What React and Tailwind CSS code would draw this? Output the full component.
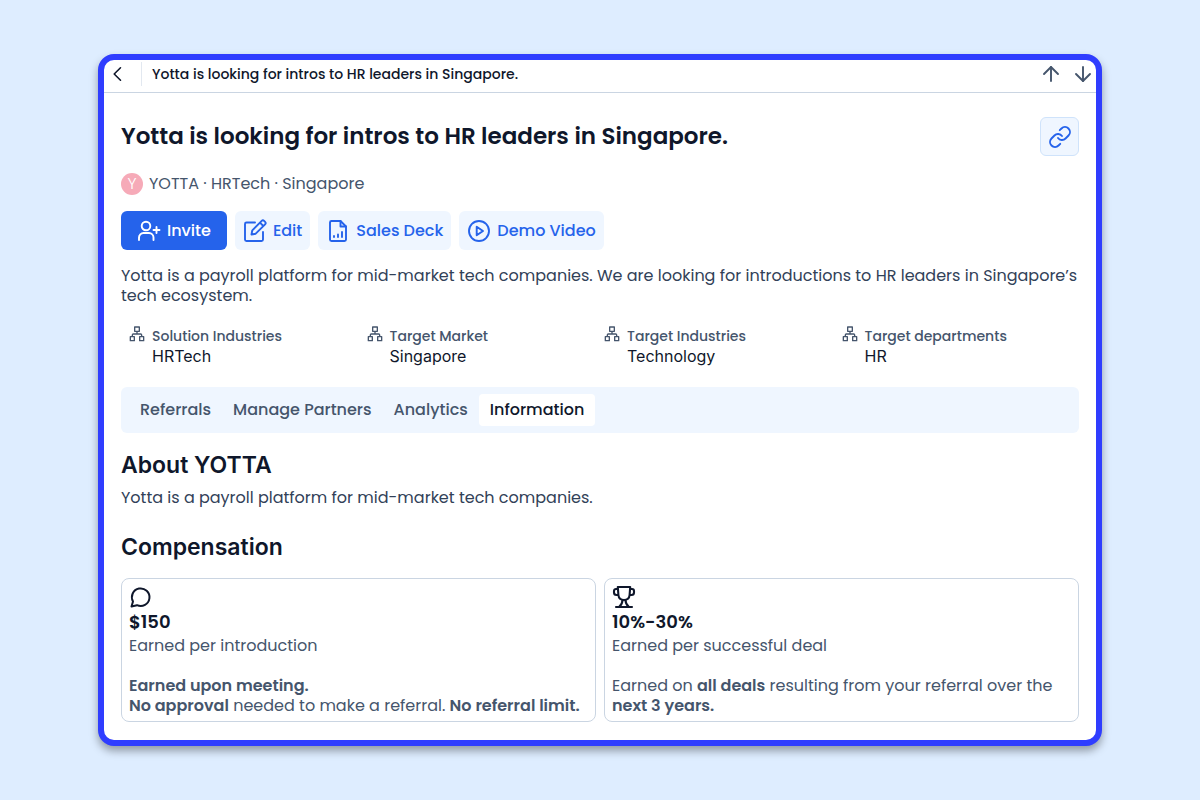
import React from 'react';
import { ArrowDown, ArrowUp, Link } from 'lucide-react';

const Icon = ({ className, width = 1.5, children }) => (
    <svg
        viewBox="0 0 24 24"
        fill="none"
        stroke="currentColor"
        strokeWidth={width}
        strokeLinecap="round"
        strokeLinejoin="round"
        className={className}
        aria-hidden="true"
    >
        {children}
    </svg>
);

const BackIcon = () => (
    <Icon className="size-6" width={1.6}>
        <path d="M15.5 5.8 9.2 12l6.3 6.2" />
    </Icon>
);

const InviteIcon = () => (
    <Icon className="size-6" width={1.9}>
        <circle cx="9" cy="7" r="4.3" />
        <path d="M2 21v-2.5a4.5 4.5 0 0 1 4.5-4.5h5.5a4.5 4.5 0 0 1 4.5 4.5V21M19.5 8v6M16.5 11h6" />
    </Icon>
);

const EditIcon = () => (
    <Icon className="size-6" width={1.9}>
        <path d="M12 3.5H3.500A1.5 1.5 0 0 0 2 5v15.500A1.5 1.5 0 0 0 3.5 22h15a1.5 1.500 0 0 0 1.5-1.500V13" />
        <path d="M8.500 15.500l.8-4.200L18.700 1.900a1.700 1.700 0 0 1 2.400 0l1 1a1.700 1.700 0 0 1 0 2.400l-9.400 9.400zM17 3.700l3.300 3.300" />
    </Icon>
);

const DeckIcon = () => (
    <Icon className="size-6" width={1.9}>
        <path d="M14.5 2H5.500A1.5 1.500 0 0 0 4 3.500v17A1.5 1.5 0 0 0 5.5 22h13a1.5 1.5 0 0 0 1.5-1.5V7.500z" />
        <path d="M14.5 2v5.500H20M8 17v1M12 15.500V18M16 13v5" />
    </Icon>
);

const PlayIcon = () => (
    <Icon className="size-6" width={1.9}>
        <circle cx="12" cy="12" r="10" />
        <path d="M9.700 7.800v8.400l6.300-4.200z" />
    </Icon>
);

const SitemapIcon = () => (
    <Icon className="size-4 shrink-0 text-slate-600" width={2}>
        <path d="M8.500 1.500h7v6.500h-7zM2 16h6v6H2zM16 16h6v6h-6zM12 8v4M5 16v-2.500A1.500 1.500 0 0 1 6.500 12h11a1.500 1.500 0 0 1 1.500 1.500V16" />
    </Icon>
);

const ChatIcon = () => (
    <Icon className="size-6" width={2}>
        <path d="M2.500 21.500l1.500-5A8.800 8.800 0 1 1 8 20.200z" />
    </Icon>
);

const TrophyIcon = () => (
    <Icon className="size-6" width={2.100}>
        <path d="M5.800 2h12.400l-.6 8c-.3 3.200-2.800 5-5.600 5s-5.300-1.800-5.600-5zM5.800 4H4a2 2 0 0 0-2 2v1.500a2.500 2.500 0 0 0 2.500 2.500h1.800M18.200 4H20a2 2 0 0 1 2 2v1.500a2.500 2.500 0 0 1-2.500 2.500h-1.800" />
        <path d="M10.500 15c0 3-1 5-3.500 7M13.500 15c0 3 1 5 3.500 7M4 22h16" />
    </Icon>
);

const actions = [
    { label: 'Edit', icon: EditIcon },
    { label: 'Sales Deck', icon: DeckIcon },
    { label: 'Demo Video', icon: PlayIcon },
];

const fields = [
    { label: 'Solution Industries', value: 'HRTech' },
    { label: 'Target Market', value: 'Singapore' },
    { label: 'Target Industries', value: 'Technology' },
    { label: 'Target departments', value: 'HR' },
];

const tabs = ['Referrals', 'Manage Partners', 'Analytics', 'Information'];

const TopBar = () => (
    <header className="flex h-[33px] items-center justify-between border-b border-slate-300 pb-1 pl-px">
        <div className="flex items-center">
            <button type="button" aria-label="Back" className="text-slate-900">
                <BackIcon />
            </button>
            <span className="ml-3 h-6 w-px bg-slate-200" />
            <span className="ml-[10px] text-sm leading-6 font-medium text-slate-900">
                Yotta is looking for intros to HR leaders in Singapore.
            </span>
        </div>
        <div className="flex gap-2 pr-px text-slate-600">
            <button type="button" aria-label="Previous">
                <ArrowUp className="size-6" strokeWidth={1.9} />
            </button>
            <button type="button" aria-label="Next">
                <ArrowDown className="size-6" strokeWidth={1.9} />
            </button>
        </div>
    </header>
);

const RewardCard = ({ icon: CardIcon, amount, caption, children }) => (
    <article className="rounded-lg border border-slate-300 px-[7px] pt-[6px] pb-[5px] text-slate-600">
        <div className="text-slate-900">
            <CardIcon />
            <p className="mt-[3px] text-lg leading-5 font-semibold">{amount}</p>
        </div>
        <p className="mt-1 leading-5">{caption}</p>
        <p className="mt-5 leading-5">{children}</p>
    </article>
);

const App = () => {
    return (
        <div className="min-h-screen bg-[#deedff] px-[98px] py-[54px] font-['Poppins','Inter',sans-serif] text-base">
            <main className="overflow-hidden rounded-2xl border-[6px] border-[#2f3dff] bg-white shadow-[0_5px_8px_rgba(0,0,0,0.35)]">
                <TopBar />

                <div className="px-[17px] pt-6 pb-[18px]">
                    <div className="flex items-center justify-between">
                        <h1 className="text-[23px] font-semibold text-slate-900">
                            Yotta is looking for intros to HR leaders in Singapore.
                        </h1>
                        <button
                            type="button"
                            aria-label="Copy link"
                            className="flex size-[39px] items-center justify-center rounded-md border border-[#cfe3fb] bg-[#eff6ff] text-[#2563eb]"
                        >
                            <Link className="size-6" strokeWidth={1.9} />
                        </button>
                    </div>

                    <div className="mt-[17px] flex items-center gap-[6px] leading-[22px] text-slate-600">
                        <span className="flex size-[22px] items-center justify-center rounded-full bg-[#f6aab8] font-light text-white">Y</span>
                        <span>YOTTA · HRTech · Singapore</span>
                    </div>

                    <div className="mt-4 flex gap-2 font-medium">
                        <button type="button" className="flex h-[39px] items-center gap-[6px] rounded-md bg-[#2563eb] px-4 text-white">
                            <InviteIcon />
                            Invite
                        </button>
                        {actions.map(({ label, icon: ActionIcon }) => (
                            <button
                                key={label}
                                type="button"
                                className="flex h-[39px] items-center gap-[6px] rounded-md bg-[#eff6ff] px-2 text-[#2563eb]"
                            >
                                <ActionIcon />
                                {label}
                            </button>
                        ))}
                    </div>

                    <p className="mt-4 leading-5 text-slate-700">
                        Yotta is a payroll platform for mid-market tech companies. We are looking for introductions to HR leaders in Singapore’s tech ecosystem.
                    </p>

                    <dl className="mt-5 grid grid-cols-4 pl-2">
                        {fields.map((field) => (
                            <div key={field.label} className="flex gap-[7px]">
                                <SitemapIcon />
                                <div className="leading-5">
                                    <dt className="text-sm leading-5 font-medium text-slate-600">{field.label}</dt>
                                    <dd className="font-['Inter',sans-serif] text-slate-900">{field.value}</dd>
                                </div>
                            </div>
                        ))}
                    </dl>

                    <nav className="mt-[21px] flex h-[46px] items-center rounded-md bg-[#eff6ff] px-2 font-medium">
                        {tabs.map((tab) => (
                            <button
                                key={tab}
                                type="button"
                                className={
                                    tab === 'Information'
                                        ? 'h-8 rounded-sm bg-white px-[11px] text-slate-900'
                                        : 'h-8 px-[11px] text-slate-600'
                                }
                            >
                                {tab}
                            </button>
                        ))}
                    </nav>

                    <section className="mt-4">
                        <h2 className="font-['Inter',sans-serif] text-[23px] leading-8 font-semibold text-slate-900">About YOTTA</h2>
                        <p className="mt-[7px] leading-5 text-slate-700">Yotta is a payroll platform for mid-market tech companies.</p>
                    </section>

                    <section className="mt-[23px]">
                        <h2 className="font-['Inter',sans-serif] text-[23px] leading-8 font-semibold text-slate-900">Compensation</h2>
                        <div className="mt-[15px] grid grid-cols-2 gap-2">
                            <RewardCard icon={ChatIcon} amount="$150" caption="Earned per introduction">
                                <b className="font-semibold">Earned upon meeting.</b>
                                <br />
                                <b className="font-semibold">No approval</b> needed to make a referral.{' '}
                                <b className="font-semibold">No referral limit.</b>
                            </RewardCard>
                            <RewardCard icon={TrophyIcon} amount="10%-30%" caption="Earned per successful deal">
                                Earned on <b className="font-semibold">all deals</b> resulting from your referral over the{' '}
                                <b className="font-semibold">next 3 years.</b>
                            </RewardCard>
                        </div>
                    </section>
                </div>
            </main>
        </div>
    );
};

export default App;
